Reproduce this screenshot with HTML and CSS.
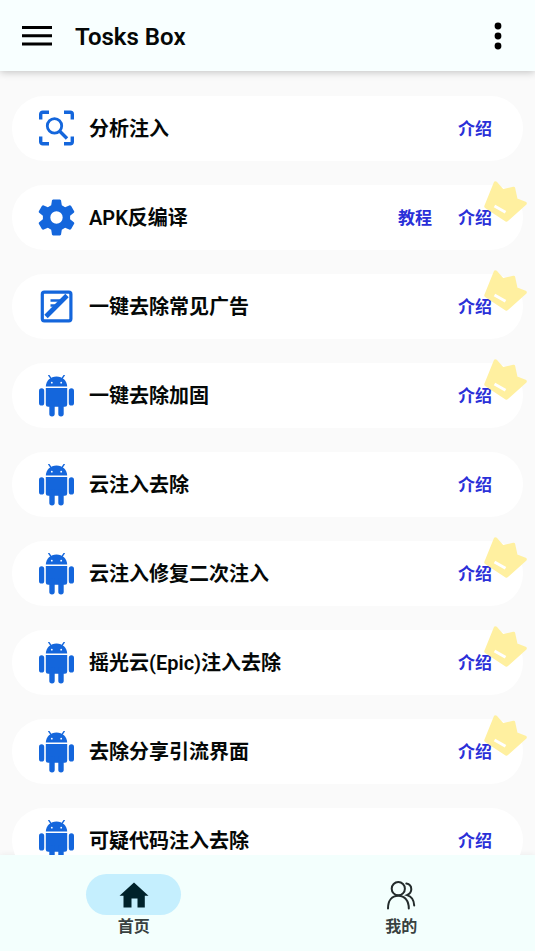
FILE: index.html
```html
<!DOCTYPE html>
<html lang="zh-CN">
<head>
<meta charset="utf-8">
<meta name="viewport" content="width=device-width, initial-scale=1">
<title>Tosks Box</title>
<link rel="stylesheet" href="styles.css">
</head>
<body>
<svg class="sprite" aria-hidden="true">
  <symbol id="android" viewBox="0 1 36 42">
    <path d="M7.300 12.600C7.500 6.800 12 2.500 18 2.500s10.500 4.300 10.700 10.100z"/>
    <path d="M10.300 1.300l2.300 3.300M25.700 1.300l-2.300 3.300" fill="none" stroke="currentColor" stroke-width="1.400" stroke-linecap="round"/>
    <circle cx="13.300" cy="8.700" r=".9" fill="#fff"/>
    <circle cx="22.700" cy="8.700" r=".9" fill="#fff"/>
    <path d="M7.300 14h21.400v16.500a2.300 2.300 0 0 1-2.300 2.300H9.600a2.300 2.300 0 0 1-2.300-2.300z"/>
    <rect x=".5" y="14.200" width="5.200" height="17.300" rx="2.600"/>
    <rect x="30.300" y="14.200" width="5.200" height="17.300" rx="2.600"/>
    <rect x="10.800" y="26" width="5.400" height="16.500" rx="2.700"/>
    <rect x="19.800" y="26" width="5.400" height="16.500" rx="2.700"/>
  </symbol>
  <symbol id="crown" viewBox="0 0 43 42">
    <path d="M11.500 3L18.500 11L29.500 8.500L32 20L41 23.500L22.500 40L2 26.500z" stroke="currentColor" stroke-width="3.500" stroke-linejoin="round"/>
    <path d="M10.500 26l11 6.200" stroke="#fff" stroke-width="3"/>
  </symbol>
</svg>

<header class="topbar">
  <button class="icon-button" type="button" aria-label="菜单">
    <svg width="30" height="22" viewBox="0 0 30 22"><path d="M0 2.500h30M0 10.700h30M0 18.900h30" stroke="currentColor" stroke-width="3"/></svg>
  </button>
  <h1 class="title">Tosks Box</h1>
  <button class="icon-button" type="button" aria-label="更多">
    <svg width="8" height="28" viewBox="0 0 8 28"><circle cx="4" cy="4" r="3.400"/><circle cx="4" cy="14" r="3.400"/><circle cx="4" cy="24" r="3.400"/></svg>
  </button>
</header>

<main class="content">
  <ul class="tools">
    <li class="tool">
      <svg class="tool-icon" viewBox="0 1 36 42"><path class="outline" d="M2.200 12.500V7.200a2 2 0 0 1 2-2h6.300M25.500 5.200h6.300a2 2 0 0 1 2 2v5.300M33.800 29.500v5.300a2 2 0 0 1-2 2h-6.300M10.500 36.800H4.200a2 2 0 0 1-2-2v-5.300" stroke-width="3.400"/><path class="outline" d="M21 24l7.500 7.500" stroke-width="3.400"/><circle class="outline" cx="16" cy="18.900" r="7.200" stroke-width="2.800"/></svg>
      <h2 class="name">分析注入</h2>
      <a class="link" href="#">介绍</a>
    </li>
    <li class="tool">
      <svg class="tool-icon" viewBox="0 1 36 42"><path fill-rule="evenodd" d="M14.500 3.500h7l1 .8.800 5 3.300 1.900 4.700-1.900 1.200.4 3.300 5.700-.2 1.200-4 3.100v3.600l4 3.100.2 1.200-3.300 5.700-1.200.4-4.700-1.900-3.300 1.900-.8 5-1 .8h-7l-1-.8-.8-5-3.300-1.900-4.700 1.900-1.200-.4L.2 27.600l.2-1.200 4-3.100v-3.600l-4-3.100-.2-1.200 3.300-5.700 1.200-.4 4.700 1.900 3.300-1.900.8-5zM18 15.300a6.200 6.200 0 1 0 0 12.400 6.200 6.200 0 0 0 0-12.400z"/></svg>
      <h2 class="name">APK反编译</h2>
      <a class="link" href="#">教程</a>
      <a class="link" href="#">介绍</a>
      <svg class="crown"><use href="#crown"/></svg>
    </li>
    <li class="tool">
      <svg class="tool-icon" viewBox="0 0 36 42"><rect class="outline" x="3.800" y="6.200" width="28.600" height="28.600" rx="2" stroke-width="3.200"/><path class="outline" d="M7.500 30.500L28.500 9.500" stroke-width="4.800"/><path class="outline" d="M12 14.500h10M12 19.500h6" stroke-width="2.400"/><path class="outline" d="M12 24h3" stroke-width="2.400"/></svg>
      <h2 class="name">一键去除常见广告</h2>
      <a class="link" href="#">介绍</a>
      <svg class="crown"><use href="#crown"/></svg>
    </li>
    <li class="tool">
      <svg class="tool-icon"><use href="#android"/></svg>
      <h2 class="name">一键去除加固</h2>
      <a class="link" href="#">介绍</a>
      <svg class="crown"><use href="#crown"/></svg>
    </li>
    <li class="tool">
      <svg class="tool-icon"><use href="#android"/></svg>
      <h2 class="name">云注入去除</h2>
      <a class="link" href="#">介绍</a>
    </li>
    <li class="tool">
      <svg class="tool-icon"><use href="#android"/></svg>
      <h2 class="name">云注入修复二次注入</h2>
      <a class="link" href="#">介绍</a>
      <svg class="crown"><use href="#crown"/></svg>
    </li>
    <li class="tool">
      <svg class="tool-icon"><use href="#android"/></svg>
      <h2 class="name">摇光云(Epic)注入去除</h2>
      <a class="link" href="#">介绍</a>
      <svg class="crown"><use href="#crown"/></svg>
    </li>
    <li class="tool">
      <svg class="tool-icon"><use href="#android"/></svg>
      <h2 class="name">去除分享引流界面</h2>
      <a class="link" href="#">介绍</a>
      <svg class="crown"><use href="#crown"/></svg>
    </li>
    <li class="tool">
      <svg class="tool-icon"><use href="#android"/></svg>
      <h2 class="name">可疑代码注入去除</h2>
      <a class="link" href="#">介绍</a>
    </li>
  </ul>
</main>

<nav class="tabs">
  <a class="tab" href="#" aria-current="page">
    <span class="pill"><svg width="30" height="28" viewBox="0 0 30 28"><path d="M15 1.500L29.500 14.800h-3.700V26.500h-7.300v-9h-6v9H4.500V14.800H.5z"/></svg></span>
    <span class="tab-label">首页</span>
  </a>
  <a class="tab" href="#">
    <span class="pill"><svg class="outline" width="30" height="30" viewBox="0 0 30 30" stroke-width="2" stroke-linecap="round"><circle cx="12.300" cy="8.700" r="6.600"/><path d="M2 28.500C2 20.500 6 15.800 12.300 15.800S22.800 20.500 22.800 28.500M20.300 3.600c3.200.6 5 2.600 5 5.600 0 2.400-1.600 4.700-4.300 5.900 4.300 1.200 7 5 7.200 10.400"/></svg></span>
    <span class="tab-label">我的</span>
  </a>
</nav>
</body>
</html>
```
FILE: styles.css
```css
* {
  box-sizing: border-box;
}

body {
  margin: 0;
  height: 100vh;
  display: flex;
  flex-direction: column;
  background: #fafafa;
  color: #050807;
  font-family: Roboto, "Noto Sans CJK SC", sans-serif;
}

svg {
  display: block;
  fill: currentColor;
}

.outline {
  fill: none;
  stroke: currentColor;
}

.sprite {
  position: absolute;
  width: 0;
  height: 0;
}

.topbar {
  display: flex;
  align-items: center;
  flex-shrink: 0;
  height: 71px;
  padding: 0 22px;
  background: #f8ffff;
  box-shadow: 0 1px 8px rgba(0, 0, 0, 0.24);
  z-index: 1;
}

.icon-button {
  display: flex;
  justify-content: center;
  min-width: 30px;
  padding: 0;
  border: 0;
  background: none;
  color: #000;
}

.title {
  flex: 1;
  margin: 2px 0 0 23px;
  font-size: 24px;
  font-weight: 600;
}

.content {
  flex: 1;
  min-height: 0;
  overflow: hidden auto;
  scrollbar-width: none;
}

.tools {
  display: flex;
  flex-direction: column;
  gap: 24px;
  margin: 0;
  padding: 25px 12px;
  list-style: none;
}

.tool {
  position: relative;
  display: flex;
  align-items: center;
  height: 65px;
  padding: 0 31px 0 26px;
  border-radius: 32px;
  background: #fff;
}

.tool-icon {
  width: 37px;
  height: 42px;
  color: #1466dc;
}

.name {
  flex: 1;
  margin: 0 0 0 14px;
  font-size: 20px;
  line-height: 30px;
  font-weight: 600;
}

.link {
  margin-left: 26px;
  color: #2a30d8;
  font-size: 17px;
  line-height: 26px;
  font-weight: 600;
  text-decoration: none;
}

.crown {
  position: absolute;
  top: -5px;
  right: -4px;
  width: 43px;
  height: 42px;
  color: #fff0a0;
  pointer-events: none;
}

.tabs {
  display: flex;
  flex-shrink: 0;
  height: 96px;
  background: #f3fffd;
  box-shadow: 0 -1px 6px rgba(0, 0, 0, 0.05);
}

.tab {
  flex: 1;
  display: flex;
  flex-direction: column;
  align-items: center;
  padding-top: 19px;
  color: #232b2b;
  text-decoration: none;
}

.pill {
  display: flex;
  align-items: center;
  justify-content: center;
  width: 95px;
  height: 41px;
  border-radius: 21px;
}

.tab[aria-current] .pill {
  background: #c5effe;
  color: #00222b;
}

.tab-label {
  color: #394140;
  font-size: 16px;
  line-height: 24px;
  font-weight: 600;
}
```
